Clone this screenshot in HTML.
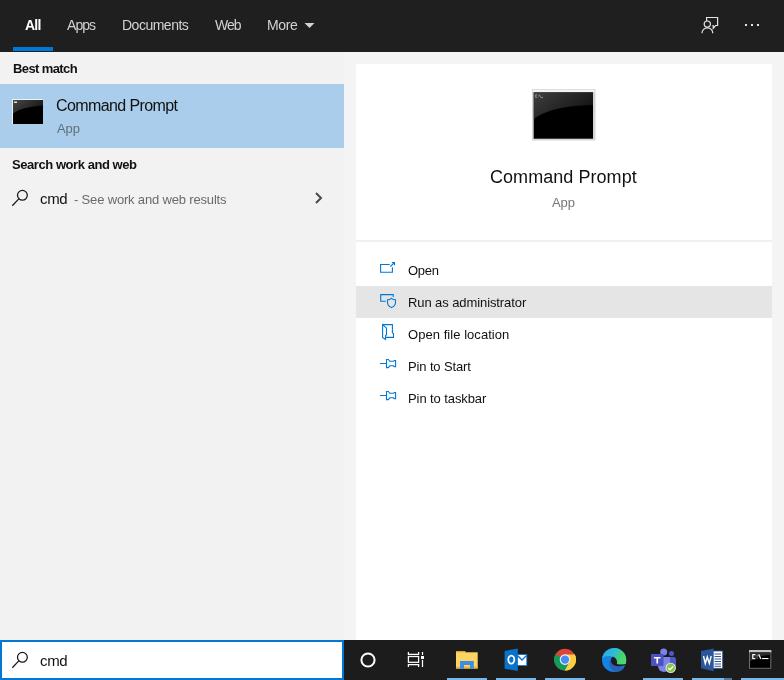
<!DOCTYPE html>
<html><head><meta charset="utf-8">
<style>
*{box-sizing:border-box;margin:0;padding:0}
html,body{width:784px;height:680px;overflow:hidden;background:#f2f2f2;font-family:"Liberation Sans",sans-serif;}
body{position:relative}
.abs{position:absolute}
.t{position:absolute;white-space:pre;will-change:transform}
svg{position:absolute;overflow:visible}
#top{left:0;top:0;width:784px;height:52px;background:#1f1f1f}
#left{left:0;top:52px;width:344px;height:588px;background:#f2f2f2}
#gap{left:344px;top:52px;width:440px;height:588px;background:#f4f4f4}
#card{left:356px;top:64px;width:416px;height:576px;background:#fff}
#sel{left:0;top:84px;width:344px;height:64px;background:#a9cdea}
#hl{left:356px;top:286px;width:416px;height:32px;background:#e5e5e5}
#div{left:356px;top:240px;width:416px;height:2px;background:#f0f0f0}
#task{left:0;top:640px;width:784px;height:40px;background:#1c1c1c}
#sbox{left:0;top:640px;width:344px;height:40px;background:#fff;border:2px solid #0078d7}
.ind{position:absolute;top:678px;height:2px;background:#76b9ed}
</style></head><body>
<div id="top" class="abs">
  <div class="abs" style="left:13px;top:47px;width:40px;height:4px;background:#0078d7"></div>
</div>
<div id="left" class="abs"></div>
<div id="gap" class="abs"></div>
<div id="card" class="abs"></div>
<div id="sel" class="abs"></div>
<div id="div" class="abs"></div>
<div id="hl" class="abs"></div>
<div id="task" class="abs"></div>
<div id="sbox" class="abs"></div>
<div class="t" style="left:24.7px;top:15.1px;font-size:14px;line-height:20px;color:#ffffff;letter-spacing:-0.76px;font-weight:bold">All</div>
<div class="t" style="left:66.5px;top:15.1px;font-size:14px;line-height:20px;color:#d2d2d2;letter-spacing:-0.95px">Apps</div>
<div class="t" style="left:121.8px;top:15.1px;font-size:14px;line-height:20px;color:#d2d2d2;letter-spacing:-0.5px">Documents</div>
<div class="t" style="left:214.9px;top:15.1px;font-size:14px;line-height:20px;color:#d2d2d2;letter-spacing:-1.02px">Web</div>
<div class="t" style="left:267.2px;top:15.1px;font-size:14px;line-height:20px;color:#d2d2d2;letter-spacing:-0.38px">More</div>
<div class="t" style="left:12.5px;top:59.0px;font-size:13px;line-height:19px;color:#111111;letter-spacing:-0.61px;font-weight:bold">Best match</div>
<div class="t" style="left:56.4px;top:94.7px;font-size:16px;line-height:22px;color:#111111;letter-spacing:-0.6px">Command Prompt</div>
<div class="t" style="left:56.6px;top:118.5px;font-size:13px;line-height:19px;color:#5f6f7d;letter-spacing:-0.05px">App</div>
<div class="t" style="left:12.0px;top:155.0px;font-size:13px;line-height:19px;color:#111111;letter-spacing:-0.44px;font-weight:bold">Search work and web</div>
<div class="t" style="left:40.0px;top:187.8px;font-size:15px;line-height:21px;color:#111111;letter-spacing:-0.35px">cmd</div>
<div class="t" style="left:73.5px;top:189.5px;font-size:13px;line-height:19px;color:#6b6b6b;letter-spacing:-0.17px">- See work and web results</div>
<div class="t" style="left:490.0px;top:164.8px;font-size:18px;line-height:24px;color:#111111;letter-spacing:0.05px">Command Prompt</div>
<div class="t" style="left:552.0px;top:193.0px;font-size:13px;line-height:19px;color:#767676;letter-spacing:-0.05px">App</div>
<div class="t" style="left:408.3px;top:261.0px;font-size:13px;line-height:19px;color:#111111;letter-spacing:-0.28px">Open</div>
<div class="t" style="left:407.7px;top:292.5px;font-size:13px;line-height:19px;color:#111111;letter-spacing:-0.09px">Run as administrator</div>
<div class="t" style="left:408.3px;top:325.0px;font-size:13px;line-height:19px;color:#111111;letter-spacing:0.05px">Open file location</div>
<div class="t" style="left:407.7px;top:356.8px;font-size:13px;line-height:19px;color:#111111;letter-spacing:-0.13px">Pin to Start</div>
<div class="t" style="left:407.7px;top:388.7px;font-size:13px;line-height:19px;color:#111111;letter-spacing:-0.09px">Pin to taskbar</div>
<div class="t" style="left:40.0px;top:650.3px;font-size:15px;line-height:21px;color:#111111;letter-spacing:-0.35px">cmd</div>
<svg width="784" height="680" style="left:0;top:0" viewBox="0 0 784 680">
<defs>
<linearGradient id="gl" x1="0" y1="0" x2="1" y2="0.6"><stop offset="0" stop-color="#5a5a5a"/><stop offset="1" stop-color="#1a1a1a"/></linearGradient>
<linearGradient id="edg1" x1="0" y1="0" x2="1" y2="1"><stop offset="0" stop-color="#35c1f1"/><stop offset="1" stop-color="#1b6fd0"/></linearGradient>
<linearGradient id="edg2" x1="0" y1="0" x2="1" y2="0.35"><stop offset="0" stop-color="#25a6e6"/><stop offset="0.55" stop-color="#2fbcd8"/><stop offset="0.8" stop-color="#3fd07a"/><stop offset="1" stop-color="#4fd86a"/></linearGradient>
</defs>
<!-- More arrow -->
<path d="M304.5 23 H314.5 L309.5 28 Z" fill="#d2d2d2"/>
<!-- feedback icon -->
<g fill="none" stroke="#e4e4e4" stroke-width="1.2">
<path d="M706.6 21 V17.5 H717.6 V25.5 H715.6 L713.2 28.3 V25.5 H712.4"/>
<circle cx="707.3" cy="24.1" r="3.1"/>
<path d="M702 33.2 a5.4 5.4 0 0 1 10.8 0"/>
</g>
<!-- dots -->
<rect x="745" y="24" width="2" height="2" fill="#e4e4e4"/><rect x="751" y="24" width="2" height="2" fill="#e4e4e4"/><rect x="757" y="24" width="2" height="2" fill="#e4e4e4"/>
<!-- small cmd icon -->
<rect x="12" y="99" width="31" height="25" fill="#eef2f6"/>
<rect x="13" y="100" width="30" height="24" fill="#000"/>
<path d="M13 100 H43 V105.500 C30 106.500 20 108.500 13 113.500 Z" fill="url(#gl)" opacity="0.8"/>
<rect x="14" y="101.500" width="3" height="1.500" fill="#ddd"/>
<!-- big cmd icon -->
<rect x="532" y="89" width="63.500" height="51.500" fill="#d2d6da"/>
<rect x="532.800" y="89.700" width="62" height="2.300" fill="#f2f3f4"/>
<rect x="533.700" y="92.300" width="59.300" height="46.400" fill="#000"/>
<path d="M533.700 92.300 H593 V105 C568 105.500 547 109 533.700 119 Z" fill="url(#gl)" opacity="0.7"/>
<path d="M537 94.800 h-1.300 v2.600 h1.300 M538.300 95.300 v0.600 M538.300 96.600 v0.600 M539.300 94.600 l1.400 2.800 M541 97.600 h2" fill="none" stroke="#a8a8a8" stroke-width="0.800"/>
<!-- list magnifier -->
<g fill="none" stroke="#1a1a1a" stroke-width="1.3">
<circle cx="22.4" cy="195.3" r="4.9"/><path d="M18.8 198.900 L12.300 205.700"/>
<circle cx="22.4" cy="657.300" r="4.9"/><path d="M18.8 660.900 L12.300 667.700"/>
</g>
<!-- chevron -->
<path d="M316 193 L321 198 L316 203" fill="none" stroke="#4a4a4a" stroke-width="2"/>
<!-- action icons -->
<g fill="none" stroke="#0078d7" stroke-width="1.1">
<path d="M389.6 264.500 H380.6 V272.300 H392.4 V267.2 M390.300 266.700 L394.500 262.500 M391.800 262.500 H394.500 V265.2"/>
<path d="M393.200 297 V294.600 H380.700 V301.300 H385.800"/>
<path d="M387.500 299.800 C389 299.800 390.500 299.200 391.500 298.300 C392.500 299.200 394 299.800 395.500 299.800 V302.500 C395.500 305 393.500 306.800 391.500 307.600 C389.500 306.800 387.500 305 387.500 302.500 Z"/>
<path d="M382.600 324.600 H392.400 V333 L393.500 333.600 V337.400 H385.600 M382.600 324.600 L386.500 328.200 V334.800 L385.500 335.500 V339.400 L382.600 337.500 Z"/>
<path d="M380 363.500 H386.500 M386.500 359.500 V367.600 H388.300 L389.800 365.800 H393.500 L394.300 366.600 H395.600 V360.500 H394.300 L393.500 361.300 H389.800 L388.300 359.500 Z"/>
<path d="M380 395.500 H386.500 M386.500 391.500 V399.600 H388.300 L389.800 397.800 H393.500 L394.300 398.600 H395.600 V392.500 H394.300 L393.500 393.300 H389.800 L388.300 391.500 Z"/>
</g>
<!-- TASKBAR -->
<circle cx="368" cy="660" r="6.6" fill="none" stroke="#fff" stroke-width="2"/>
<g fill="none" stroke="#fff" stroke-width="1.25">
<rect x="408.4" y="656.5" width="10.2" height="5.800"/>
<path d="M408.4 652 V654.250 H418.6 V652 M408.4 667 V664.600 H418.6 V667 M422.500 652 V655 M422.500 660 V667"/>
</g>
<rect x="421" y="656" width="3" height="3" fill="#fff"/>
<!-- explorer -->
<rect x="456" y="651" width="9.5" height="3" fill="#e6a12e"/>
<rect x="456" y="652.300" width="21.700" height="16.200" fill="#ffd465"/>
<rect x="456" y="666.5" width="21.700" height="2" fill="#f0b63c"/>
<path d="M460 668.700 V661 H473.800 V668.700 H470 V665 H464 V668.700 Z" fill="#3a8ee6"/>
<!-- outlook -->
<rect x="517" y="654.600" width="9.800" height="11" fill="#fff" stroke="#0a72c8" stroke-width="0.8"/>
<path d="M517.500 655.500 L522 660 L526.500 655.500" fill="none" stroke="#0a72c8" stroke-width="1.4"/>
<path d="M504.600 651 L517.800 648.400 V671 L504.600 668.700 Z" fill="#0a72c8"/>
<ellipse cx="511.300" cy="659.600" rx="3" ry="4" fill="none" stroke="#fff" stroke-width="1.8"/>
<!-- chrome -->
<circle cx="565" cy="659.600" r="10.900" fill="#db4437"/>
<path d="M565 659.600 L555.560 654.150 A10.900 10.900 0 0 0 565 670.500 L574.440 654.150 Z" fill="#0f9d58" transform="rotate(0 565 659.600)"/>
<path d="M565 659.600 L574.800 654.600 A10.900 10.900 0 0 1 565 670.500 L569.500 662 Z" fill="#ffcd40"/>
<path d="M565 654.600 H574.800 A10.900 10.900 0 0 1 565 670.500 L569.600 662.300 Z" fill="#ffcd40"/>
<circle cx="565" cy="659.600" r="5.300" fill="#f1f1f1"/>
<circle cx="565" cy="659.600" r="4.200" fill="#4c8bf5"/>
<!-- edge -->
<circle cx="614.1" cy="660" r="12.1" fill="#1583e0"/>
<path d="M602.100 658.500 A12.100 12.100 0 0 1 626.200 660 L626 664 C623 664.800 619.500 664.800 616.800 664 C617.500 661 616.500 658.500 613.500 657 C610 655.500 605 655.500 602.100 658.500 Z" fill="url(#edg2)"/>
<path d="M609.500 660.500 C608.500 665 611 670.500 616.500 672 C621 671.800 624 669.500 625 666 C621 668.500 613.500 667.500 611.500 660 Z" fill="#2a60b5"/>
<path d="M613 656.800 C610.500 658 610.300 662 612.500 664.300 C615.500 667 621.500 667 625 665 L626 663.700 C623 664.800 619.500 664.900 616.800 664 C617.600 661 616.500 658.300 613 656.800 Z" fill="#1c1c1c"/>
<path d="M626.500 664 L625 666 C624 669.500 621 671.800 617.500 672.200 L622 675 L629 668 Z" fill="#1c1c1c"/>
<!-- teams -->
<circle cx="671.500" cy="653.400" r="2.500" fill="#5059c9"/>
<rect x="667" y="657" width="9" height="11" rx="2.500" fill="#5059c9"/>
<circle cx="663.700" cy="652" r="3.500" fill="#7b83eb"/>
<path d="M658 657 H670 V666 A6 6 0 0 1 658 666 Z" fill="#7b83eb"/>
<rect x="651" y="654" width="12.500" height="12" rx="0.800" fill="#4b53bc"/>
<path d="M654 657 H660.500 V658.600 H658.100 V663.500 H656.400 V658.600 H654 Z" fill="#fff"/>
<circle cx="670.700" cy="667.900" r="5.200" fill="#f0f0e0"/>
<circle cx="670.700" cy="667.900" r="4.300" fill="#8bc34a"/>
<path d="M668.300 668 L670 669.700 L673.200 666.300" fill="none" stroke="#fff" stroke-width="1.300"/>
<!-- word -->
<rect x="712" y="651" width="10.700" height="17.300" fill="#fff" stroke="#2b579a" stroke-width="0.8"/>
<path d="M714.500 654 H721 M714.500 656.500 H721 M714.500 659 H721 M714.500 661.500 H721 M714.500 664 H721 M714.500 666.300 H721" stroke="#2b579a" stroke-width="1" fill="none"/>
<path d="M701 651 L713.700 648.600 V671.300 L701 668.300 Z" fill="#2b579a"/>
<path d="M703.500 656 L705.300 663.500 L707.300 657 L709.300 663.500 L711.200 656" fill="none" stroke="#fff" stroke-width="1.400" stroke-linejoin="miter"/>
<!-- cmd taskbar -->
<rect x="749" y="650" width="22.300" height="18.700" fill="#707070"/>
<rect x="749" y="650" width="22.300" height="2.400" fill="#c4c4c4"/>
<rect x="750" y="652.500" width="20.300" height="15.300" fill="#000"/>
<path d="M750 652.500 H770.300 V655 C760 655.500 754 657.500 750 661.500 Z" fill="#2c2c2c"/>
<path d="M755.400 654.700 h-2.600 v4 h2.600" fill="none" stroke="#f4f4f4" stroke-width="1.300"/>
<path d="M757.100 655.300 v1 M757.100 657.600 v1" fill="none" stroke="#cfcfcf" stroke-width="1"/>
<path d="M758.700 654.300 l2.100 4.700" fill="none" stroke="#f4f4f4" stroke-width="1.300"/>
<rect x="762.100" y="658" width="6.400" height="1.100" fill="#fff"/>
</svg>
<div class="ind" style="left:447px;width:40px"></div>
<div class="ind" style="left:496px;width:40px"></div>
<div class="ind" style="left:545px;width:40px"></div>
<div class="ind" style="left:643px;width:40px"></div>
<div class="ind" style="left:692px;width:32px"></div>
<div class="ind" style="left:724px;width:8px;background:#54789e"></div>
<div class="ind" style="left:741px;width:43px"></div>

</body></html>
